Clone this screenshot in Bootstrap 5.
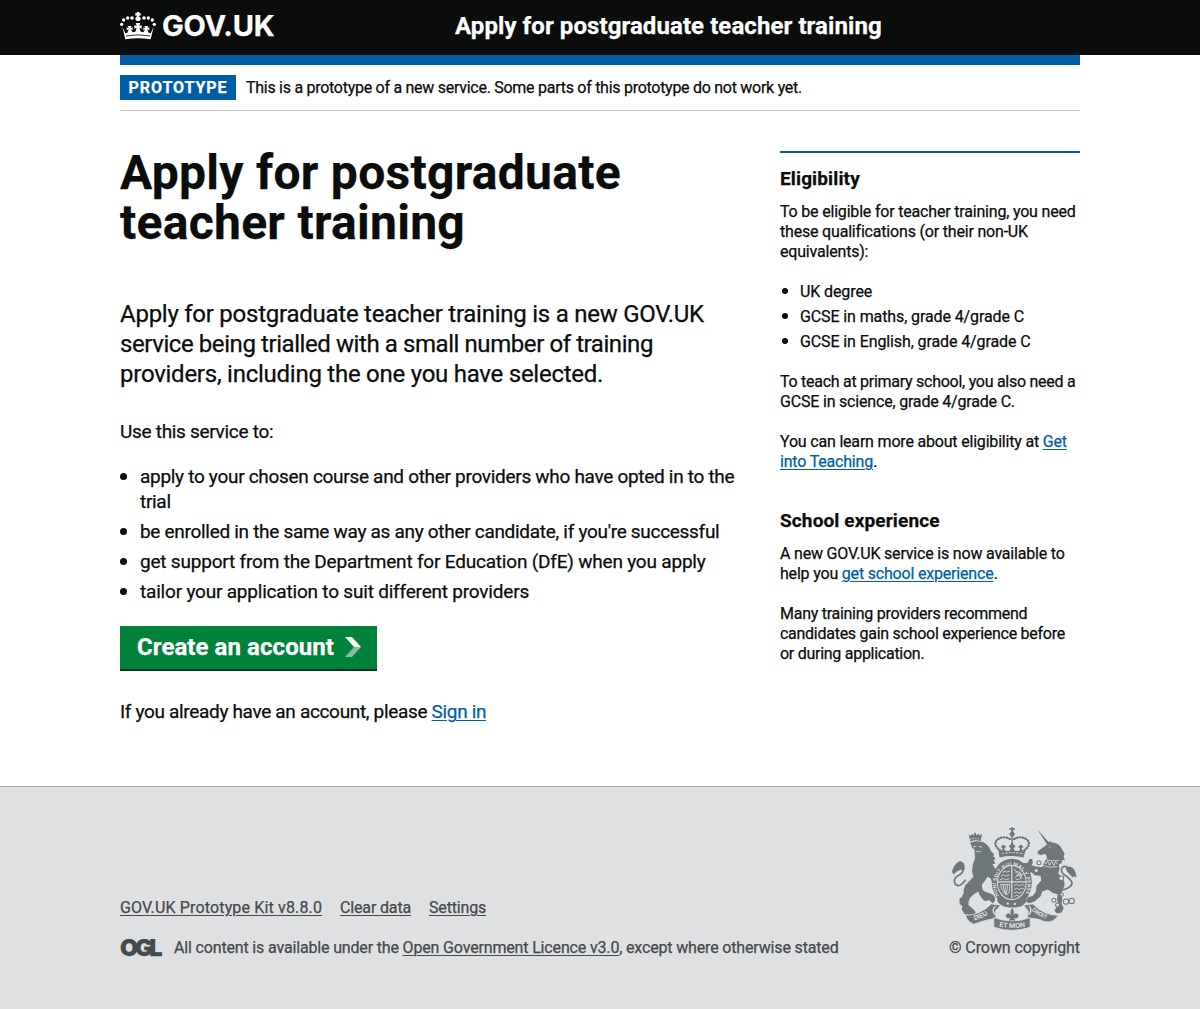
<!DOCTYPE html>
<html lang="en">
<head>
<meta charset="utf-8">
<meta name="viewport" content="width=device-width, initial-scale=1">
<title>Apply for postgraduate teacher training</title>
<link href="https://cdn.jsdelivr.net/npm/bootstrap@5.3.0/dist/css/bootstrap.min.css" rel="stylesheet">
<style>
  body { font-family: Roboto, "Liberation Sans", sans-serif; font-size: 19px; line-height: 25px; letter-spacing: -.3px; color: #0b0c0c; background: #dee0e2; -webkit-text-stroke: .25px; }
  svg { -webkit-text-stroke: 0; }
  a { color: #005ea5; text-decoration-thickness: 1px; text-underline-offset: 2px; }
  p a { margin-right: .3px; }
  .page-width { width: 960px; }
  .site-header { height: 55px; background: #0b0c0c; color: #fff; }
  .site-logo { width: 335px; font: 700 29px/30px Inter, sans-serif; letter-spacing: -.2px; }
  .site-logo svg { width: 36px; height: 28px; margin-right: 6px; }
  .service-name { font-size: 24px; line-height: 30px; letter-spacing: .08px; }
  .phase-banner { height: 56px; border-top: 10px solid #005ea5; border-bottom: 1px solid #bfc1c3; font-size: 16px; line-height: 20px; letter-spacing: -.275px; }
  .phase-tag { background: #005ea5; color: #fff; height: 25px; line-height: 25px; width: 116px; margin-right: 10px; letter-spacing: .94px; }
  .columns { --bs-gutter-x: 30px; width: 990px; margin-left: -15px; }
  .main-col { width: 660px; padding-bottom: 62px; }
  .side-col { width: 330px; }
  .page-title { font-size: 48px; line-height: 50px; letter-spacing: .28px; padding-top: 37px; margin-bottom: 51px; }
  .lead-text { font-size: 24px; line-height: 30px; letter-spacing: -.25px; margin-bottom: 30px; }
  .snug { letter-spacing: -.42px; }
  .dot-list { padding-left: 20px; list-style: none; }
  .dot-list li { margin-bottom: 5px; }
  .dot-list li.airy { letter-spacing: -.2px; }
  .dot-list li::before { content: ""; float: left; width: 7px; height: 7px; border-radius: 50%; background: #0b0c0c; margin: 9px 0 0 -20px; }
  .start-button { background: #00823b; color: #fff; width: 257px; height: 45px; margin-top: 22px; border-bottom: 2px solid #003618; font-size: 24px; line-height: 30px; letter-spacing: .07px; padding: 0 16px 2px 17px; }
  .sign-in { letter-spacing: -.33px; }
  .side-panel { border-top: 2px solid #005ea5; margin-top: 40px; padding-top: 13px; font-size: 16px; line-height: 20px; letter-spacing: -.19px; }
  .side-panel h2 { font-size: 19px; line-height: 25px; letter-spacing: .13px; margin-bottom: 11px; }
  .side-panel p { margin-bottom: 20px; }
  .side-panel .tight { letter-spacing: -.27px; }
  .side-panel .dot-list { margin-bottom: 20px; letter-spacing: -.11px; }
  .side-panel .dot-list li::before { width: 6px; height: 6px; margin: 6px 0 0 -18px; }
  .side-panel .next-head { margin-top: 36px; }
  .site-footer { height: 223px; border-top: 1px solid #a1acb2; background: #dee0e2; color: #454a4c; font-size: 16px; line-height: 20px; letter-spacing: -.16px; padding-top: 40px; }
  .site-footer a { color: #454a4c; }
  .footer-links { gap: 18px; margin-bottom: 20px; }
  .footer-links a:first-child { letter-spacing: .15px; }
  .ogl-mark { font: 900 23.5px/20px Inter, sans-serif; letter-spacing: -3.3px; width: 54px; }
  .crest { width: 131px; letter-spacing: -.09px; }
  .crest svg { width: 126px; height: 104px; margin: 0 0 7px 2px; }
</style>
<script src="https://cdn.jsdelivr.net/npm/bootstrap@5.3.0/dist/js/bootstrap.bundle.min.js"></script>
</head>
<body>
<header class="site-header">
  <div class="page-width h-100 mx-auto d-flex align-items-center pb-1">
    <div class="site-logo d-flex align-items-center">
      <svg viewBox="0 0 108 84" fill="#fff">
        <path d="M50 10l-4 1V3l4 1V0h8v4l4-1v8l-4-1v4l5 6-5 7h-8l-5-7 5-6z"/>
        <circle cx="36" cy="18" r="5.5"/><circle cx="23" cy="18" r="5"/><circle cx="11" cy="24" r="5"/><circle cx="5" cy="37" r="5"/><circle cx="72" cy="18" r="5.5"/><circle cx="85" cy="18" r="5"/><circle cx="97" cy="24" r="5"/><circle cx="103" cy="37" r="5"/>
        <path d="M7 44l9 20 6-2 4-10-6 3v-9l6 3-3-7h12l-3 7 6-3v9l-6-3 6 9 8-2 4-12-7 3V39l7 3-3-9h14l-3 9 7-3v11l-7-3 4 12 8 2 6-9-6 3v-9l6 3-3-7h12l-3 7 6-3v9l-6-3 4 10 6 2 9-20-9 38q-38-7-76 0z"/>
        <path d="M18 72q36-7 72 0" fill="none" stroke="#0b0c0c" stroke-width="2.5"/>
      </svg>
      <span>GOV.UK</span>
    </div>
    <div class="service-name fw-bold">Apply for postgraduate teacher training</div>
  </div>
</header>
<main class="bg-white">
  <div class="page-width mx-auto">
    <div class="phase-banner d-flex align-items-center">
      <strong class="phase-tag text-center">PROTOTYPE</strong>
      <span>This is a prototype of a new service. Some parts of this prototype do not work yet.</span>
    </div>
    <div class="row columns">
      <div class="main-col">
        <h1 class="page-title fw-bold">Apply for postgraduate<br>teacher training</h1>
        <p class="lead-text">Apply for postgraduate teacher training is a new GOV.UK <span class="snug">service being trialled with a small number of training</span> providers, including the one you have selected.</p>
        <p class="mb-0 pb-1">Use this service to:</p>
        <ul class="dot-list mb-0 mt-3">
          <li>apply to your chosen course and other providers who have opted in to the trial</li>
          <li>be enrolled in the same way as any other candidate, if you're successful</li>
          <li class="airy">get support from the Department for Education (DfE) when you apply</li>
          <li class="airy">tailor your application to suit different providers</li>
        </ul>
        <a href="#" class="start-button fw-bold text-decoration-none d-flex align-items-center justify-content-between">
          <span>Create an account</span>
          <svg width="16" height="20" viewBox="0 0 16 20"><path d="M0 0h7l9 10H9z" fill="#fff"/><path d="M9 10h7L7 20H0z" fill="#80c09d"/></svg>
        </a>
        <p class="sign-in mb-0 pt-4 mt-1">If you already have an account, please <a href="#">Sign in</a></p>
      </div>
      <aside class="side-col">
        <div class="side-panel">
          <h2 class="fw-bold">Eligibility</h2>
          <p>To be eligible for teacher training, you need these qualifications (or their non-UK equivalents):</p>
          <ul class="dot-list">
            <li>UK degree</li>
            <li>GCSE in maths, grade 4/grade C</li>
            <li>GCSE in English, grade 4/grade C</li>
          </ul>
          <p><span class="tight">To teach at primary school, you also need a</span> GCSE in science, grade 4/grade C.</p>
          <p>You can learn more about eligibility at <a href="#">Get into Teaching</a>.</p>
          <h2 class="next-head fw-bold">School experience</h2>
          <p>A new GOV.UK service is now available to help you <a href="#">get school experience</a>.</p>
          <p class="tight mb-0">Many training providers recommend candidates gain school experience before or during application.</p>
        </div>
      </aside>
    </div>
  </div>
</main>
<footer class="site-footer">
  <div class="page-width mx-auto d-flex justify-content-between align-items-end">
    <div>
      <div class="footer-links d-flex"><a href="#">GOV.UK Prototype Kit v8.8.0</a><a href="#">Clear data</a><a href="#">Settings</a></div>
      <div class="d-flex"><span class="ogl-mark">OGL</span><span>All content is available under the <a href="#">Open Government Licence v3.0</a>, except where otherwise stated</span></div>
    </div>
    <div class="crest">
      <svg viewBox="35 35 377 311" fill="#6f777b">
        <defs>
          <path id="garter" d="M180 243A47 57 0 1 1 254 243"/>
          <path id="dieu" d="M105 314Q138 306 164 282"/>
          <path id="etmon" d="M173 331Q218 343 270 331"/>
          <path id="droit" d="M275 283Q298 308 340 314"/>
        </defs>
        <!-- lion -->
        <path d="M88 58l6 3 4-6 4 5 5-10 5 10 5-5 4 5 7-4-4 21q-17-5-31 1z"/>
        <path d="M91 72q16-6 32 0" fill="none" stroke="#dee0e2" stroke-width="2.5" stroke-dasharray="5 3"/>
        <path d="M92 82q17-8 38-2 18 8 24 26l11 12-4 4 8 9-7 3 6 10-9 2q10 12 12 26v34h-10l-8-18-9-4q-6 12-16 22-2 16 8 22l22 8q12 6 8 20l-6 8-10-10-14 2-9-8q-8-8-10-20-16 8-24 18-8 12-6 22l16 14q8 8 5 17l-12 7-7-8-14-3-8-13 2-11-8-6-1-15q9-5 13-17-3-12 5-24l24-25-4-16 2-20 7-20-2-26-6-4z"/>
        <path d="M101 95l9-3M118 92l10 4M110 108q7 4 15-1" fill="none" stroke="#dee0e2" stroke-width="2.5"/>
        <path d="M79 193Q60 219 48 206Q40 192 54 182Q74 172 70 160" fill="none" stroke="#6f777b" stroke-width="5"/>
        <path d="M37 179Q38 148 62 137Q78 140 76 162Q68 168 64 162Q52 166 44 178L39 170z"/>
        <!-- central crown -->
        <path d="M215 43l-5 1v-6l5 1v-3h6v3l5-1v6l-5-1v6l6 7-7 9v34h-4V65l-7-9 6-7z"/>
        <path d="M181 104Q160 88 172 74Q190 58 216 73M255 104Q276 88 264 74Q246 58 220 73" fill="none" stroke="#6f777b" stroke-width="7" stroke-linecap="round" stroke-dasharray=".5 8"/>
        <path d="M181 104Q160 88 172 74Q190 58 216 73M255 104Q276 88 264 74Q246 58 220 73" fill="none" stroke="#6f777b" stroke-width="3"/>
        <path d="M176 98l10 8 4-6-6-6 8-7 8 7-6 6 4 7 12-1 4-7-6-6 10-12 10 12-6 6 4 7 12 1 4-7-6-6 8-7 8 7-6 6 4 6 10-8-8 28q-36-8-72 0z"/>
        <path d="M186 115q32-7 64 0" fill="none" stroke="#dee0e2" stroke-width="2.5" stroke-dasharray="8 3"/>
        <!-- garter and shield -->
        <ellipse cx="217" cy="201" rx="60" ry="71"/>
        <ellipse cx="217" cy="201" rx="43" ry="51" fill="none" stroke="#dee0e2" stroke-width="3"/>
        <path d="M217 151v98M175 199h84" stroke="#dee0e2" stroke-width="3.5"/>
        <g fill="none" stroke="#dee0e2" stroke-width="2.5">
          <path d="M189 171l8-4 5 3 9-3M184 182l8-4 7 4 11-4M181 193l10-4 8 4 11-4"/>
          <path d="M224 160l23 29M226 188l18-20M227 171q12-7 18 7t-16 14M252 176l-22 5"/>
          <path d="M183 207h28q0 27-9 31-14-7-19-31zM190 208q2 12 9 28M197 208v28M204 208q0 15-4 28"/>
          <path d="M224 211l8-4 6 4 10-4 7 3M224 222l8-4 6 4 10-4 6 3M224 233l8-4 6 4 10-4M224 243l8-4 6 3"/>
        </g>
        <text font-family="Inter, sans-serif" font-weight="700" font-size="14" letter-spacing="1.1" fill="#dee0e2"><textPath href="#garter" startOffset="3">HONI SOIT QUI MAL Y PENSE</textPath></text>
        <path d="M180 248q37 26 74 0l8 6q-10 20-26 20-18 4-36 0-18-2-28-20z"/>
        <circle cx="205" cy="264" r="3.5" fill="#dee0e2"/><circle cx="226" cy="265" r="3.5" fill="#dee0e2"/>
        <!-- unicorn -->
        <path d="M293 42l36 40-6 6z"/>
        <path d="M318 90l10-8 2-6 7 5q22 0 30 20l8 14-3 8 4 12-8-2-2 10-8 4q4 14-2 26l14 18q10 16 0 30l-4 10 2 20-2 14 6 12-6 14-14 3-8-10 12-14-4-20 2-14q-16-2-30-14l-16 6-5 14-18 16-16 5-10-6 6-12 14-4 10-12 2-18 14-16-2-14-18-2-8-8-12 0-7-10 6-5-14-6 2-7 12 0 6-12 8 0 2 10-4 8 14 4 18 2 6-16 8-12-4-12-14 4-9-3-1-8z"/>
        <circle cx="331" cy="95" r="2" fill="#dee0e2"/>
        <path d="M313 128q18 12 46 6M311 150q20 10 42 3" fill="none" stroke="#dee0e2" stroke-width="2.5"/>
        <path d="M312 134l6 12 6-10 6 14 6-12 7 12 5-12 6 8" fill="none" stroke="#dee0e2" stroke-width="2.5"/>
        <path d="M366 224Q402 216 396 198Q388 186 374 178Q360 166 368 156Q378 148 390 162" fill="none" stroke="#6f777b" stroke-width="5"/>
        <path d="M378 158Q388 148 400 158Q410 168 410 186L403 182Q400 190 392 178Q382 172 378 158z"/>
        <g fill="#dee0e2" stroke="#6f777b" stroke-width="3"><circle cx="298" cy="142" r="6"/><circle cx="290" cy="165" r="6"/><circle cx="365" cy="188" r="7"/><circle cx="343" cy="254" r="6"/><circle cx="354" cy="268" r="6"/><circle cx="379" cy="258" r="8"/><circle cx="396" cy="256" r="8"/><circle cx="366" cy="237" r="5"/></g>
        <!-- ribbon -->
        <g stroke="#dee0e2" stroke-width="2.5">
          <path d="M78 299q44 0 78-34l28 4-16 17 2 22q-32 4-67 18-19-7-25-27z"/>
          <path d="M356 299q-44 0-76-34l-28 4 14 17-2 22q34 0 50 10 28 6 42-19z"/>
          <path d="M163 306q56 20 109 0v29q-56 18-109 0z"/>
        </g>
        <path d="M168 272q-14 12 0 26M268 272q12 10 0 26" fill="none" stroke="#dee0e2" stroke-width="4"/>
        <path d="M218 277q10 12 2 24 6-12 14-6t-2 13h-8l4 7h-20l4-7h-8q-10-7-2-13t14 6q-8-12 2-24z"/>
        <g font-family="Inter, sans-serif" font-weight="700" fill="#dee0e2"><text font-size="19"><textPath href="#dieu">DIEU</textPath></text><text font-size="20"><textPath href="#etmon" startOffset="6">ET MON</textPath></text><text font-size="17"><textPath href="#droit" startOffset="1">DROIT</textPath></text></g>
      </svg>
      <div class="text-nowrap">© Crown copyright</div>
    </div>
  </div>
</footer>
</body>
</html>
